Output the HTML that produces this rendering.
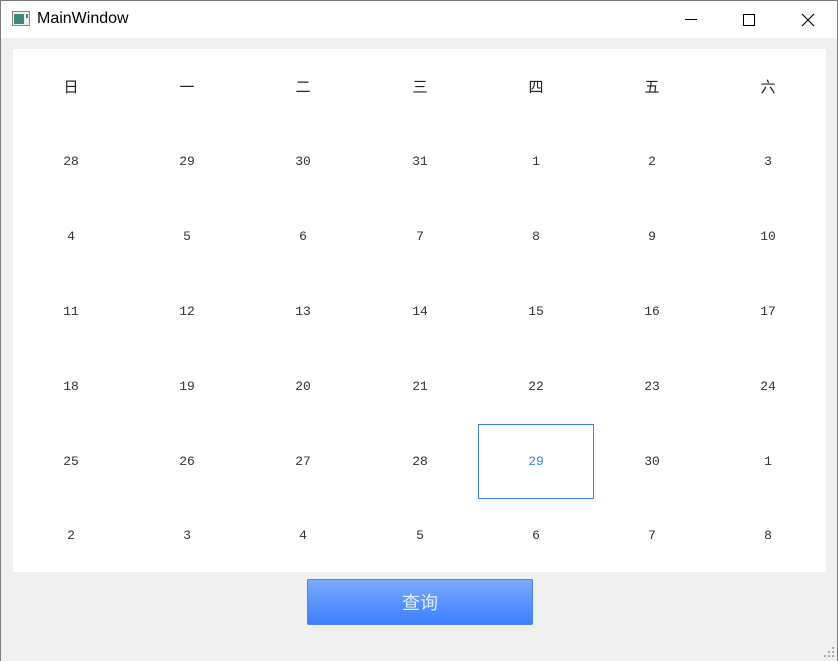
<!DOCTYPE html>
<html><head><meta charset="utf-8"><style>
*{margin:0;padding:0;box-sizing:border-box}
body{width:838px;height:661px;overflow:hidden;background:#f0f0f0;font-family:"Liberation Sans","Noto Sans CJK SC",sans-serif;position:relative}
#frame{position:absolute;left:0;top:0;width:838px;height:661px;border:1px solid #7a7a7a;border-bottom:none}
#title{position:absolute;left:1px;top:1px;width:836px;height:37px;background:#fff}
#title .t{position:absolute;left:36px;top:9px;font-size:16px;color:#000}
#cal{position:absolute;left:13px;top:49px;width:813px;height:523px;background:#fff}
.c{position:absolute;width:116px;height:75px;display:flex;align-items:center;justify-content:center;font-family:"Liberation Mono","Noto Sans CJK SC",monospace;font-size:13px;color:#333}
.h{font-family:"Noto Sans CJK SC",sans-serif;font-size:15px;color:#222}
.sel{border:1px solid #3d7fff;color:#3d7fff}
#btn{position:absolute;left:307px;top:579px;width:226px;height:46px;border:1px solid #4a86f5;border-radius:2px;background:linear-gradient(#7aaaff,#3d7fff);color:#e6eeff;font-family:"Noto Sans CJK SC",sans-serif;font-size:18px;display:flex;align-items:center;justify-content:center}
</style></head><body>
<div id="frame"></div>
<div id="title">
<svg style="position:absolute;left:11px;top:10px" width="18" height="15"><rect x="0.5" y="0.5" width="17" height="14" fill="#eee" stroke="#888"/><rect x="2" y="3" width="10" height="10" fill="#3a8a7a"/><rect x="14" y="3" width="2" height="4" fill="#3a8a7a"/></svg>
<span class="t">MainWindow</span>
<svg style="position:absolute;left:680px;top:12px" width="140" height="14"><line x1="4" y1="6.5" x2="16" y2="6.5" stroke="#000"/><rect x="62.5" y="1.5" width="11" height="11" fill="none" stroke="#000"/><path d="M121 1L133 13M133 1L121 13" stroke="#000" stroke-width="1.1"/></svg>
</div>
<div id="cal"></div>
<div id="btn">查询</div>
<svg style="position:absolute;left:824px;top:647px" width="12" height="12" fill="#aaa"><rect x="8" y="0" width="2" height="2"/><rect x="4" y="4" width="2" height="2"/><rect x="8" y="4" width="2" height="2"/><rect x="0" y="8" width="2" height="2"/><rect x="4" y="8" width="2" height="2"/><rect x="8" y="8" width="2" height="2"/></svg>
<script>
var cal=document.getElementById('cal');
var h=['日','一','二','三','四','五','六'];
var d=[[28,29,30,31,1,2,3],[4,5,6,7,8,9,10],[11,12,13,14,15,16,17],[18,19,20,21,22,23,24],[25,26,27,28,29,30,1],[2,3,4,5,6,7,8]];
var html='';
function cell(r,c,t,cls){var x=Math.round(c*116.2),y=r*75;html+='<div class="c '+cls+'" style="left:'+x+'px;top:'+y+'px;'+(r==6?'height:73px;':'')+'">'+t+'</div>';}
for(var i=0;i<7;i++)cell(0,i,h[i],'h');
for(var r=0;r<6;r++)for(var c=0;c<7;c++)cell(r+1,c,d[r][c],(r==4&&c==4)?'sel':'');
cal.innerHTML=html;
</script>
</body></html>
